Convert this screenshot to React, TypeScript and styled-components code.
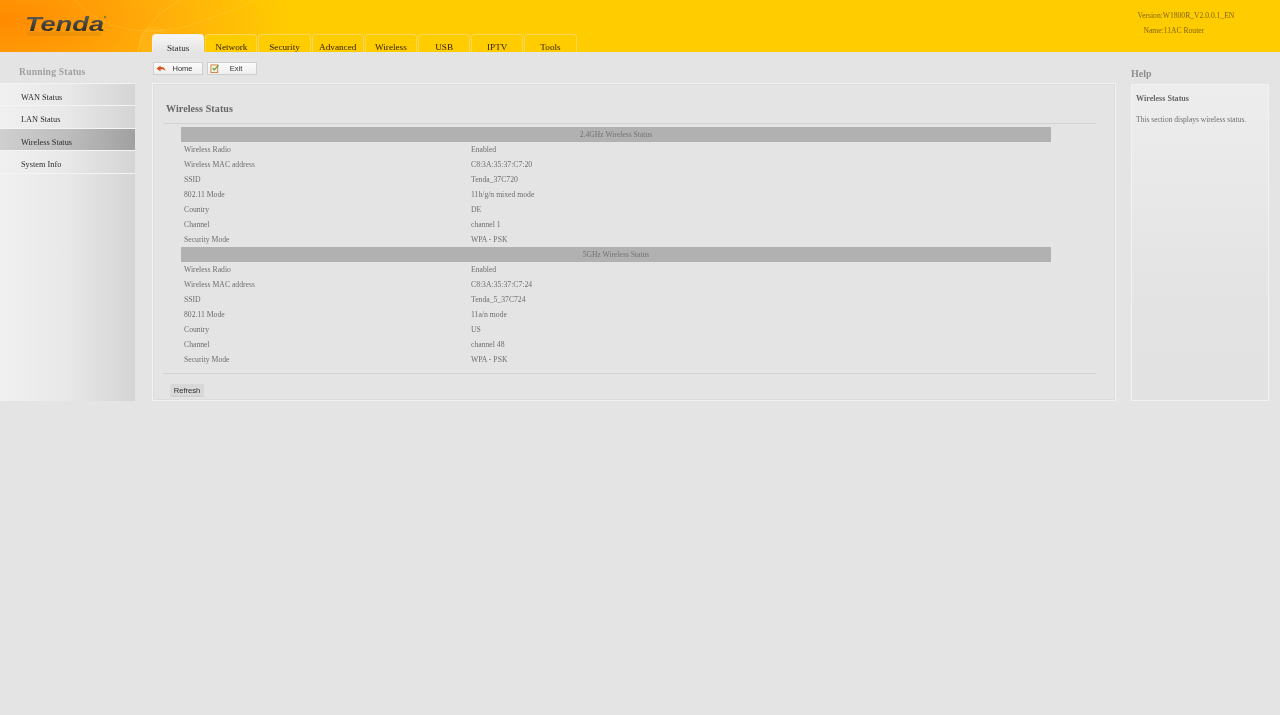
import React from "react";
import styled, { createGlobalStyle } from "styled-components";

const Global = createGlobalStyle`
  html, body { margin: 0; padding: 0; background: #e4e4e4; }
  body { font-family: "Liberation Serif", "Times New Roman", serif; min-height: 715px; overflow: hidden; }
`;

const Page = styled.div`
  width: 1280px;
  height: 715px;
  background: #e4e4e4;
  filter: blur(0.35px);
`;

const Header = styled.header`
  position: relative;
  height: 52px;
  display: flex;
  overflow: hidden;
  background:
    radial-gradient(ellipse 290px 125px at 0px 20px, #ff8a00 0%, #ff9a06 28%, #ffb20a 62%, rgba(255, 204, 0, 0) 100%),
    #ffcc00;
`;

const Swirl = styled.svg`
  position: absolute;
  left: 0;
  top: 0;
`;

const LogoBox = styled.div`
  width: 152px;
  flex: none;
  position: relative;
`;

const Logo = styled.svg`
  display: block;
  margin: 12px 0 0 25px;
  overflow: visible;
`;

const Tabs = styled.nav`
  position: relative;
  display: flex;
  align-self: flex-end;
  height: 18px;
`;

const Tab = styled.div<{ $active?: boolean }>`
  box-sizing: border-box;
  width: 52.3px;
  height: 18px;
  margin-right: 0.9px;
  padding-top: ${(p) => (p.$active ? 6.5 : 5.5)}px;
  text-align: center;
  font-size: 9.2px;
  line-height: 12px;
  color: ${(p) => (p.$active ? "#2e2e2e" : "#332300")};
  border: 1px solid ${(p) => (p.$active ? "#f0f0f0" : "#f5d75a")};
  border-bottom: none;
  border-radius: 4px 4px 0 0;
  background: ${(p) => (p.$active ? "linear-gradient(#f6f6f6, #e4e4e4)" : "#ffcc00")};
`;

const Version = styled.div`
  position: relative;
  margin-left: auto;
  width: 142.5px;
  flex: none;
  padding-top: 10px;
  font-size: 7.6px;
  color: #806508;
`;

const VersionLine = styled.div<{ $indent?: boolean }>`
  height: 15px;
  line-height: 12px;
  padding-left: ${(p) => (p.$indent ? 6 : 0)}px;
`;

const Body = styled.div`
  display: flex;
  align-items: flex-start;
`;

const Sidebar = styled.aside`
  width: 135px;
  flex: none;
  margin-right: 17px;
`;

const SideTitle = styled.h2`
  margin: 0;
  height: 31px;
  box-sizing: border-box;
  padding: 13px 0 0 19px;
  font-size: 9.6px;
  line-height: 13px;
  letter-spacing: 0.2px;
  color: #a0a0a0;
  font-weight: bold;
`;

const SideList = styled.div`
  height: 317px;
  border-top: 1px solid #f2f2f2;
  background: linear-gradient(90deg, #f0f0f0 0%, #e8e8e8 50%, #d4d4d4 100%);
`;

const SideItem = styled.div<{ $active?: boolean }>`
  box-sizing: border-box;
  height: 22.4px;
  padding: 8px 0 0 21px;
  font-size: 8.3px;
  line-height: 12px;
  color: #2c2c2c;
  border-bottom: 1px solid #f4f4f4;
  background: ${(p) => (p.$active ? "linear-gradient(90deg, #cfcfcf 0%, #bdbdbd 50%, #a0a0a0 100%)" : "none")};
`;

const Main = styled.main`
  width: 964px;
  flex: none;
`;

const Toolbar = styled.div`
  display: flex;
  gap: 3.5px;
  height: 31px;
  box-sizing: border-box;
  padding: 10px 0 0 1px;
`;

const ToolButton = styled.div`
  box-sizing: border-box;
  width: 50px;
  height: 13px;
  display: flex;
  align-items: center;
  padding-left: 2px;
  font-family: "Liberation Sans", Arial, sans-serif;
  font-size: 7.5px;
  color: #333;
  background: linear-gradient(#fafafa, #efefef);
  border: 1px solid #cfcfcf;
`;

const ToolLabel = styled.span`
  flex: 1;
  text-align: center;
  padding-right: 3px;
`;

const Panel = styled.section`
  box-sizing: border-box;
  height: 318px;
  border: 1px solid #f2f2f2;
  outline: 1px solid #dcdcdc;
  outline-offset: -2px;
  padding: 19px 19px 0 10px;
`;

const PanelTitle = styled.h1`
  margin: 0;
  height: 20px;
  padding-left: 3px;
  font-size: 10px;
  line-height: 12px;
  letter-spacing: 0.1px;
  color: #666;
  font-weight: bold;
  border-bottom: 1px solid #d2d2d2;
`;

const Table = styled.div`
  width: 870px;
  margin: 3px 0 0 18px;
`;

const SectionRow = styled.div`
  height: 15px;
  line-height: 15px;
  text-align: center;
  font-size: 7.6px;
  color: #727272;
  background: #b1b1b1;
`;

const Row = styled.div`
  display: grid;
  grid-template-columns: 287px 1fr;
  height: 15px;
  line-height: 16px;
  padding-left: 3px;
  font-size: 7.7px;
  color: #6e6e6e;
`;

const Footer = styled.div`
  margin-top: 6px;
  border-top: 1px solid #d2d2d2;
  padding: 10px 0 0 7px;
`;

const Refresh = styled.div`
  width: 34px;
  height: 12px;
  line-height: 13px;
  text-align: center;
  font-family: "Liberation Sans", Arial, sans-serif;
  font-size: 7.6px;
  color: #2c2c2c;
  background: #d8d8d8;
  border-radius: 2px;
  border-bottom: 1px solid #cccccc;
`;

const Help = styled.aside`
  width: 138px;
  margin-left: 15px;
  flex: none;
`;

const HelpTitle = styled.h2`
  margin: 0;
  height: 32px;
  box-sizing: border-box;
  padding-top: 15px;
  font-size: 10px;
  line-height: 13px;
  color: #8f8f8f;
  font-weight: bold;
`;

const HelpBox = styled.div`
  box-sizing: border-box;
  height: 317px;
  border: 1px solid #f2f2f2;
  padding: 8px 4px;
  font-size: 7.5px;
  line-height: 12px;
  color: #6e6e6e;
  background: linear-gradient(#ededed 0%, #e3e3e3 70%, #e2e2e2 100%);
`;

const HelpHead = styled.div`
  font-size: 8.1px;
  font-weight: bold;
  color: #666;
  height: 21px;
`;

const tabs = ["Status", "Network", "Security", "Advanced", "Wireless", "USB", "IPTV", "Tools"];
const side = ["WAN Status", "LAN Status", "Wireless Status", "System Info"];

const band24: [string, string][] = [
  ["Wireless Radio", "Enabled"],
  ["Wireless MAC address", "C8:3A:35:37:C7:20"],
  ["SSID", "Tenda_37C720"],
  ["802.11 Mode", "11b/g/n mixed mode"],
  ["Country", "DE"],
  ["Channel", "channel 1"],
  ["Security Mode", "WPA - PSK"],
];

const band5: [string, string][] = [
  ["Wireless Radio", "Enabled"],
  ["Wireless MAC address", "C8:3A:35:37:C7:24"],
  ["SSID", "Tenda_5_37C724"],
  ["802.11 Mode", "11a/n mode"],
  ["Country", "US"],
  ["Channel", "channel 48"],
  ["Security Mode", "WPA - PSK"],
];

function HomeIcon() {
  return (
    <svg width="10" height="9" viewBox="0 0 10 9">
      <path d="M0.5 4.5 L4.5 1.5 L4.5 3 C7 2.6 9 3.5 9.5 7 C8 5.4 6.5 5 4.5 5.4 L4.5 7.5 Z" fill="#d9531e" />
    </svg>
  );
}

function ExitIcon() {
  return (
    <svg width="10" height="9" viewBox="0 0 10 10">
      <rect x="0.5" y="1" width="7.5" height="8.5" fill="#f4f0dc" stroke="#c9803c" />
      <path d="M2.5 4.5 L4 6.5 L9 1.5" fill="none" stroke="#5c9c32" strokeWidth="1.4" />
    </svg>
  );
}

export default function App() {
  return (
    <Page>
      <Global />
      <Header>
        <Swirl width="320" height="52" viewBox="0 0 320 52">
          <path d="M75 0 C100 30 150 40 200 22 C225 13 240 8 255 0" fill="none" stroke="#ffd860" strokeOpacity="0.22" strokeWidth="1" />
          <path d="M138 52 C140 30 160 12 180 0" fill="none" stroke="#ffd860" strokeOpacity="0.3" strokeWidth="1" />
          <circle cx="155" cy="42" r="16" fill="#ffd040" fillOpacity="0.18" />
        </Swirl>
        <LogoBox>
          <Logo width="82" height="30" viewBox="0 0 82 30">
            <defs>
              <linearGradient id="logoFill" x1="0" y1="0" x2="0" y2="1">
                <stop offset="0" stopColor="#66665e" />
                <stop offset="1" stopColor="#26261f" />
              </linearGradient>
            </defs>
            <text x="0" y="19" fontFamily="Liberation Sans, sans-serif" fontSize="21" fontWeight="bold" fontStyle="italic" fill="url(#logoFill)" textLength="79" lengthAdjust="spacingAndGlyphs">Tenda</text>
            <rect x="2" y="20" width="74" height="4" fill="#b07a10" fillOpacity="0.22" />
            <circle cx="80" cy="5" r="1.2" fill="#8a7a40" />
          </Logo>
        </LogoBox>
        <Tabs>
          {tabs.map((t, i) => (
            <Tab key={t} $active={i === 0}>{t}</Tab>
          ))}
        </Tabs>
        <Version>
          <VersionLine>Version:W1800R_V2.0.0.1_EN</VersionLine>
          <VersionLine $indent>Name:11AC Router</VersionLine>
        </Version>
      </Header>
      <Body>
        <Sidebar>
          <SideTitle>Running Status</SideTitle>
          <SideList>
            {side.map((s, i) => (
              <SideItem key={s} $active={i === 2}>{s}</SideItem>
            ))}
          </SideList>
        </Sidebar>
        <Main>
          <Toolbar>
            <ToolButton><HomeIcon /><ToolLabel>Home</ToolLabel></ToolButton>
            <ToolButton><ExitIcon /><ToolLabel>Exit</ToolLabel></ToolButton>
          </Toolbar>
          <Panel>
            <PanelTitle>Wireless Status</PanelTitle>
            <Table>
              <SectionRow>2.4GHz Wireless Status</SectionRow>
              {band24.map(([k, v]) => (
                <Row key={k}><span>{k}</span><span>{v}</span></Row>
              ))}
              <SectionRow>5GHz Wireless Status</SectionRow>
              {band5.map(([k, v]) => (
                <Row key={k}><span>{k}</span><span>{v}</span></Row>
              ))}
            </Table>
            <Footer><Refresh>Refresh</Refresh></Footer>
          </Panel>
        </Main>
        <Help>
          <HelpTitle>Help</HelpTitle>
          <HelpBox>
            <HelpHead>Wireless Status</HelpHead>
            This section displays wireless status.
          </HelpBox>
        </Help>
      </Body>
    </Page>
  );
}
